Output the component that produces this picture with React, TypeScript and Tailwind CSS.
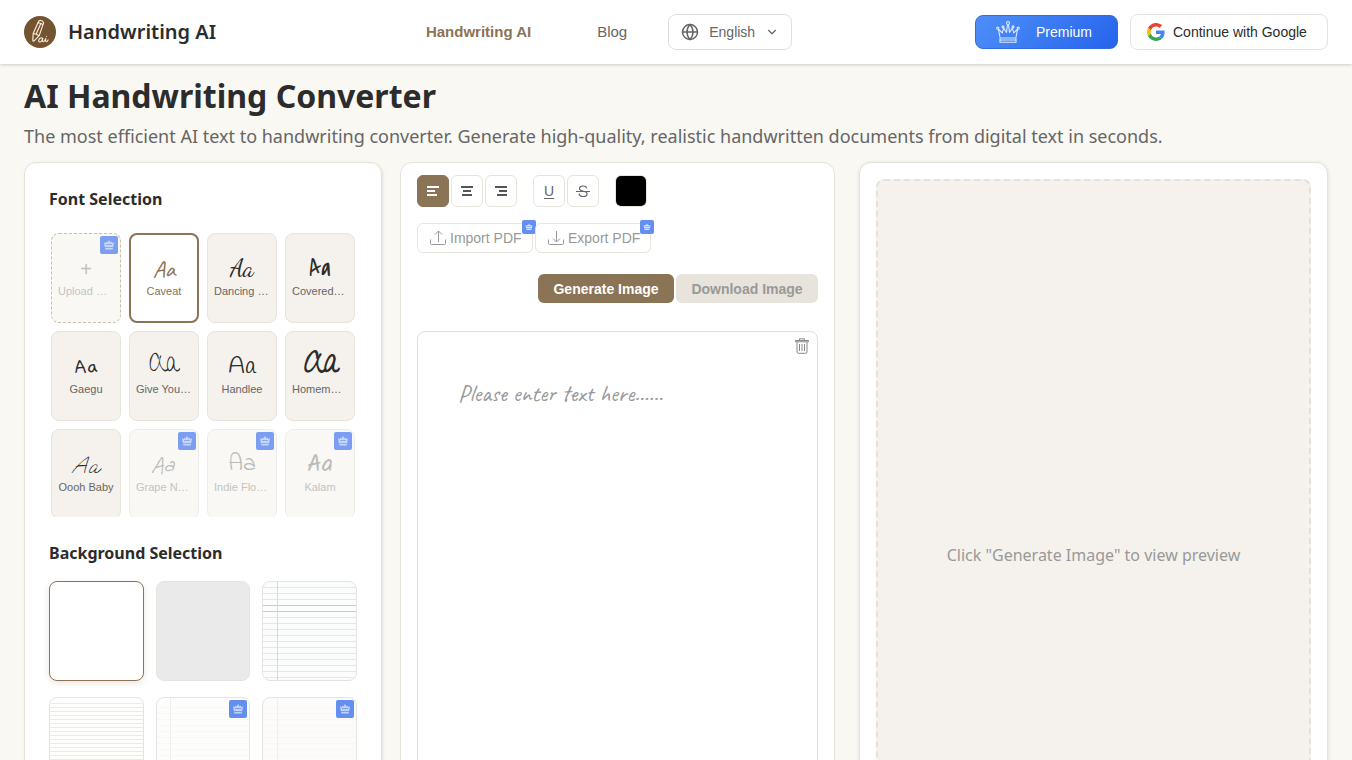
import React, { useState } from "react";
import { ChevronDown, Globe } from "lucide-react";

const fonts = [
  { name: "Caveat", sample: "font-[Caveat,cursive] text-2xl" },
  { name: "Dancing Script", short: "Dancing …", sample: "font-['Dancing_Script',cursive] text-2xl" },
  { name: "Covered By Your Grace", short: "Covered…", sample: "font-['Covered_By_Your_Grace',cursive] text-2xl" },
  { name: "Gaegu", sample: "font-[Gaegu,cursive] text-2xl" },
  { name: "Give You Glory", short: "Give You…", sample: "font-['Give_You_Glory',cursive] text-2xl" },
  { name: "Handlee", sample: "font-[Handlee,cursive] text-2xl" },
  { name: "Homemade Apple", short: "Homem…", sample: "font-['Homemade_Apple','Give_You_Glory',cursive] text-[28px] font-bold italic" },
  { name: "Oooh Baby", sample: "font-['Oooh_Baby',cursive] text-2xl" },
  { name: "Grape Nuts", short: "Grape N…", sample: "font-['Grape_Nuts',cursive] text-2xl", locked: true },
  { name: "Indie Flower", short: "Indie Flo…", sample: "font-['Indie_Flower',cursive] text-2xl", locked: true },
  { name: "Kalam", sample: "font-[Kalam,cursive] text-2xl", locked: true },
];

const backgrounds = [
  { name: "White", paper: "bg-white" },
  { name: "Gray", paper: "bg-[#eaeaea]" },
  { name: "College ruled", paper: "bg-[#fafdfc]", first: 5, step: 6, line: "#e3e8e7", margin: 14, strong: [23, 29] },
  { name: "Narrow ruled", paper: "bg-[#fefefd]", first: 5, step: 4, line: "#ebebe7" },
  { name: "Notebook", paper: "bg-[#fdfdfb]", first: 9, step: 6, line: "#f8f8f5", margin: 13, locked: true },
  { name: "Vintage", paper: "bg-[#fcfbf9]", first: 9, step: 6, line: "#f8f7f4", margin: 14, locked: true },
];

const toolClass = "flex size-8 cursor-pointer items-center justify-center rounded-md border";

const GoogleIcon = () => (
  <svg viewBox="0 0 48 48" className="size-[18px] shrink-0" aria-hidden="true">
    <path fill="#EA4335" d="M24 9.500c3.540 0 6.710 1.220 9.210 3.600l6.850-6.850C35.900 2.380 30.470 0 24 0 14.620 0 6.510 5.380 2.560 13.220l7.980 6.190C12.430 13.720 17.740 9.500 24 9.500z" />
    <path fill="#4285F4" d="M46.980 24.550c0-1.570-.15-3.090-.38-4.550H24v9.020h12.940c-.58 2.960-2.260 5.480-4.780 7.180l7.730 6c4.510-4.180 7.090-10.360 7.090-17.650z" />
    <path fill="#FBBC05" d="M10.530 28.590c-.48-1.450-.76-2.990-.76-4.590s.27-3.140.76-4.590l-7.980-6.190C.92 16.460 0 20.120 0 24c0 3.880.92 7.540 2.560 10.780l7.970-6.190z" />
    <path fill="#34A853" d="M24 48c6.480 0 11.930-2.130 15.890-5.810l-7.730-6c-2.150 1.450-4.920 2.300-8.160 2.300-6.260 0-11.570-4.220-13.470-9.910l-7.980 6.190C6.510 42.620 14.620 48 24 48z" />
  </svg>
);

const CrownIcon = ({ className }: { className?: string }) => (
  <svg viewBox="0 0 24 24" className={className} fill="none" stroke="currentColor" strokeWidth="1.1" strokeLinejoin="round" aria-hidden="true">
    <path d="M4 17.5 2.4 9.2l4 3.8 1.1-5.4 3 4.9L11.5 5h1l1 7.5 3-4.9 1.1 5.4 4-3.8L20 17.5" />
    <path d="M4 18h16v2H4zM4 20h16v2.3H4z" />
    <circle cx="12" cy="3" r="1.5" />
    <circle cx="7" cy="6.8" r="1" />
    <circle cx="17" cy="6.8" r="1" />
    <circle cx="1.8" cy="8.2" r="1.1" />
    <circle cx="22.2" cy="8.2" r="1.1" />
  </svg>
);

const BadgeCrown = ({ className }: { className?: string }) => (
  <svg viewBox="0 0 12 12" className={className} fill="currentColor" aria-hidden="true">
    <path fillRule="evenodd" d="M1 3.2 3 4V2.5l1.5 1L6 .8l1.5 2.7 1.5-1V4l2-.8-.8 5H1.8zM3 6h6v-.8H3zM2.2 9h7.6v1.6H2.2z" />
  </svg>
);

const PremiumBadge = () => (
  <span className="absolute top-[2px] right-[2px] flex size-[18px] items-center justify-center rounded-[2px] bg-[#7b9ef2] text-[#c5d6fb]">
    <BadgeCrown className="size-3" />
  </span>
);

const AlignIcon = ({ type }: { type: "left" | "center" | "right" }) => {
  const x = { left: 2, center: 4, right: 6 }[type];
  const bottom = { left: 2, center: 3, right: 4 }[type];
  return (
    <svg viewBox="0 0 16 16" className="size-4" fill="currentColor" aria-hidden="true">
      <rect x="2" y="3" width="12" height="2" />
      <rect x={x} y="7" width="8" height="2" />
      <rect x={bottom} y="11" width="10" height="2" />
    </svg>
  );
};

const TransferIcon = ({ up }: { up?: boolean }) => (
  <svg viewBox="0 0 16 16" className="size-4 shrink-0" fill="none" stroke="currentColor" aria-hidden="true">
    <path d="M.5 9.5v4a1 1 0 0 0 1 1h13a1 1 0 0 0 1-1v-4M8.5 1v11" />
    <path d={up ? "M5 4.5 8.5 1 12 4.5" : "M5 8.5 8.5 12 12 8.5"} />
  </svg>
);

const LogoMark = () => (
  <svg viewBox="0 0 32 32" className="size-8" fill="none" stroke="#f5ead8" strokeLinecap="round" strokeLinejoin="round" aria-hidden="true">
    <circle cx="16" cy="16" r="16" fill="#745330" stroke="none" />
    <path strokeWidth="1.2" d="m9.2 17.6 5.2-11.8q.9-1.8 2.8-1.3t2.4 2.4L15.2 19.6l-5.1 5.3q-1.2.7-1.3-.8zM14.1 7.2q2.5-.8 4.8 1.7M9.3 17.7q2.9-.2 5.2 1.8M12.6 17.1l4-9.1" />
    <path strokeWidth="1.1" d="M18.7 22.2q-2.400-1-3.700 1.200-.9 2.400.9 2.600 2-.2 2.900-3.600-.8 3.400.6 3.400 1.100 0 2.400-3.300-.8 3.200.6 3.200.9 0 1.700-1.700M22.400 20.300h.1" />
  </svg>
);

const PaperLines = ({ paper }: { paper: (typeof backgrounds)[number] }) => {
  if (!paper.step || !paper.first) return null;
  const rows: number[] = [];
  for (let y = paper.first; y < 98; y += paper.step) rows.push(y);

  return (
    <svg className="size-full" shapeRendering="crispEdges" aria-hidden="true">
      {rows.map((y) => (
        <line key={y} x1="0" x2="100%" y1={y} y2={y} stroke={paper.strong?.includes(y) ? "#c3cdcd" : paper.line} />
      ))}
      {paper.margin && <line x1={paper.margin} x2={paper.margin} y1="0" y2="100%" stroke={paper.locked ? "#f0efeb" : "#dcd8d8"} />}
    </svg>
  );
};

const Header = () => (
  <header className="relative flex h-16 shrink-0 items-center justify-between bg-white px-6 shadow-[0_1px_3px_rgba(0,0,0,0.18)]">
    <a href="#" className="flex items-center gap-3 font-['Noto_Sans',sans-serif] text-xl font-semibold">
      <LogoMark />
      Handwriting AI
    </a>

    <nav className="mr-1.5 flex items-center text-[15px] text-[#666]">
      <a href="#" className="px-[33px] font-bold text-[#8b7355]">Handwriting AI</a>
      <a href="#" className="px-[33px]">Blog</a>
      <label className="ml-2 flex h-9 w-[124px] items-center rounded-lg border border-[#e0dfda] pl-3">
        <Globe className="size-[18px] shrink-0" />
        <select aria-label="Language" className="ml-2.5 w-14 cursor-pointer appearance-none bg-transparent text-sm outline-none">
          <option>English</option>
          <option>Español</option>
        </select>
        <ChevronDown className="size-3.5 shrink-0" />
      </label>
    </nav>

    <div className="flex items-center gap-3">
      <button className="flex h-[34px] w-[143px] cursor-pointer items-center rounded-lg border border-[#2f6be0] bg-linear-135 from-[#4f8ff9] to-[#2563eb] pl-5 text-sm text-white">
        <CrownIcon className="mr-4 size-6 text-[#dce9ff]" />
        Premium
      </button>
      <button className="flex h-9 w-[198px] cursor-pointer items-center gap-2 rounded-lg border border-[#e3e2de] bg-white pl-4 text-sm whitespace-nowrap">
        <GoogleIcon />
        Continue with Google
      </button>
    </div>
  </header>
);

const Selections = () => {
  const [font, setFont] = useState("Caveat");
  const [background, setBackground] = useState("White");

  return (
    <aside className="w-[358px] shrink-0 rounded-xl border border-[#e5e2da] bg-white p-6 shadow-[1px_1px_3px_rgba(0,0,0,0.10)]">
      <h2 className="mb-5 font-['Noto_Sans',sans-serif] text-base font-bold">Font Selection</h2>
      <div className="grid h-[286px] grid-cols-4 content-start gap-2 overflow-y-auto p-0.5 text-[11px] [scrollbar-width:none]">
        <button className="relative flex h-[90px] cursor-pointer flex-col items-center justify-center rounded-lg border border-dashed border-[#c8bfb3] bg-[#f9f8f5] px-1.5 pb-1 text-[#c4c3c0]">
          <span className="h-7 text-xl leading-8 text-[#c5bfb7]">+</span>
          <span className="mt-0.5 w-full text-left leading-4">Upload …</span>
          <PremiumBadge />
        </button>
        {fonts.map((item) => {
          const active = item.name === font;
          const look = active
            ? "border-2 border-[#8b7355] bg-white px-[5px] text-[#8b7355]"
            : item.locked
              ? "border border-[#efede9] bg-[#f9f8f5] px-1.5 text-[#bcbbb8]"
              : "border border-[#e8e4dc] bg-[#f5f1ec] px-1.5 text-[#2c2c2c]";

          return (
            <button
              key={item.name}
              title={item.name}
              disabled={item.locked}
              onClick={() => setFont(item.name)}
              className={`relative flex h-[90px] cursor-pointer flex-col items-center justify-center rounded-lg pb-1 ${look}`}
            >
              <span className={`h-7 ${item.sample} leading-8`}>Aa</span>
              <span
                className={`mt-0.5 w-full leading-4 whitespace-nowrap ${item.short ? "text-left" : "text-center"} ${
                  active ? "text-[#8b7355]" : item.locked ? "text-[#c4c3c0]" : "text-[#666]"
                }`}
              >
                {item.short ?? item.name}
              </span>
              {item.locked && <PremiumBadge />}
            </button>
          );
        })}
      </div>

      <h2 className="mt-6 mb-4 font-['Noto_Sans',sans-serif] text-base font-bold">Background Selection</h2>
      <div className="grid grid-cols-3 gap-x-3 gap-y-4">
        {backgrounds.map((item) => (
          <button
            key={item.name}
            aria-label={item.name}
            disabled={item.locked}
            onClick={() => setBackground(item.name)}
            className={`relative h-[100px] cursor-pointer overflow-hidden rounded-lg border ${item.paper} ${
              item.name === background ? "border-[#8b7355] shadow-[0_2px_6px_rgba(139,115,85,0.2)]" : "border-[#e5e4e0]"
            }`}
          >
            <PaperLines paper={item} />
            {item.locked && (
              <span className="absolute top-[2px] right-[2px] flex size-[18px] items-center justify-center rounded-[2px] bg-[#648ff0] text-[#bdd1fc]">
                <BadgeCrown className="size-3" />
              </span>
            )}
          </button>
        ))}
      </div>
    </aside>
  );
};

const PdfButton = ({ label, up }: { label: string; up?: boolean }) => (
  <button className="relative flex h-[30px] w-[116px] cursor-pointer items-center gap-1 rounded-md border border-[#e8e5df] pl-3 text-sm whitespace-nowrap text-[#999]">
    <TransferIcon up={up} />
    {label}
    <span className="absolute -top-1 -right-1 flex size-3.5 items-center justify-center rounded-[2px] bg-[#648ff0] text-[#d3e0fd]">
      <BadgeCrown className="size-2" />
    </span>
  </button>
);

const Editor = () => {
  const [align, setAlign] = useState("left");
  const [text, setText] = useState("");

  return (
    <section className="flex min-w-0 flex-1 flex-col rounded-xl border border-[#e5e2da] bg-white px-4 pt-3 pb-4">
      <div className="flex gap-4">
        <div className="flex gap-0.5">
          {(["left", "center", "right"] as const).map((type) => (
            <button
              key={type}
              aria-label={`Align ${type}`}
              onClick={() => setAlign(type)}
              className={`${toolClass} ${type === align ? "border-[#8b7355] bg-[#8b7355] text-white" : "border-[#e8e4dc] text-[#555]"}`}
            >
              <AlignIcon type={type} />
            </button>
          ))}
        </div>
        <div className="flex gap-0.5 text-sm text-[#666]">
          <button className={`${toolClass} border-[#e8e4dc]`}>
            <span className="underline underline-offset-2">U</span>
          </button>
          <button className={`${toolClass} border-[#e8e4dc]`} aria-label="Strikethrough">
            <svg viewBox="0 0 16 16" className="size-4" fill="none" stroke="currentColor" strokeWidth="1.2" aria-hidden="true">
              <path d="M1 8.500h14M11.700 5.400C11.500 3.800 10.200 3 8.200 3S4.500 3.900 4.500 5.500c0 4 7.600 1.500 7.600 5.200 0 1.700-1.500 2.800-3.900 2.800S4.300 12.500 4.100 10.600" />
            </svg>
          </button>
        </div>
        <input
          type="color"
          aria-label="Text color"
          defaultValue="#000000"
          className="size-8 cursor-pointer appearance-none overflow-hidden rounded-md border border-[#e8e4dc] bg-black p-0 [&::-webkit-color-swatch]:border-0 [&::-webkit-color-swatch-wrapper]:p-0"
        />
      </div>

      <div className="mt-4 flex gap-0.5">
        <PdfButton label="Import PDF" up />
        <PdfButton label="Export PDF" />
      </div>

      <div className="mt-[21px] flex justify-end gap-0.5 text-sm font-bold">
        <button className="h-[29px] w-[136px] cursor-pointer rounded-md bg-[#8b7355] text-white">Generate Image</button>
        <button className="h-[29px] w-[142px] rounded-md bg-[#e8e3db] text-[#999]" disabled>Download Image</button>
      </div>

      <div className="relative mt-7 flex flex-1 rounded-lg border border-[#e0dfda]">
        <textarea
          aria-label="Text to convert"
          value={text}
          onChange={(e) => setText(e.target.value)}
          placeholder="Please enter text here......"
          className="w-full resize-none px-10 py-[47px] font-[Caveat,cursive] text-2xl leading-7 outline-none placeholder:text-[#999]"
        />
        <button aria-label="Clear text" className="absolute top-1.5 right-2 cursor-pointer text-[#888]">
          <svg viewBox="0 0 14 16" className="h-4 w-3.5" fill="none" stroke="currentColor" aria-hidden="true">
            <path d="M.5 2.500h13v1.300H.5zM4.500 2.300V.8h5v1.500M2 4v10q0 1.300 1.300 1.300h7.400q1.300 0 1.300-1.300V4M4.500 6v7M7 6v7M9.500 6v7" />
          </svg>
        </button>
      </div>
    </section>
  );
};

export default function App() {
  return (
    <div className="flex h-screen flex-col overflow-y-auto bg-[#f9f8f3] font-['Liberation_Sans',Arial,sans-serif] text-[#2c2c2c] [scrollbar-width:none]">
      <Header />
      <main className="px-6 pt-2 pb-6">
        <h1 className="font-['Noto_Sans',sans-serif] text-[32px] leading-12 font-bold">AI Handwriting Converter</h1>
        <p className="mt-0.5 font-['Noto_Sans',sans-serif] text-lg leading-7 text-[#666]">
          The most efficient AI text to handwriting converter. Generate high-quality, realistic handwritten documents from digital text in seconds.
        </p>

        <div className="mt-3 grid grid-cols-[811fr_469fr] gap-6">
          <div className="flex min-w-0 gap-[18px]">
            <Selections />
            <Editor />
          </div>
          <section className="flex min-h-[786px] min-w-0 rounded-xl border border-[#e5e2da] bg-white p-4 shadow-[0_1px_4px_rgba(0,0,0,0.12)]">
            <div className="flex flex-1 items-center justify-center rounded-lg border-2 border-dashed border-[#e5e1da] bg-[#f5f1ec] text-center font-['Noto_Sans',sans-serif] text-base text-[#999]">
              Click "Generate Image" to view preview
            </div>
          </section>
        </div>
      </main>
    </div>
  );
}
